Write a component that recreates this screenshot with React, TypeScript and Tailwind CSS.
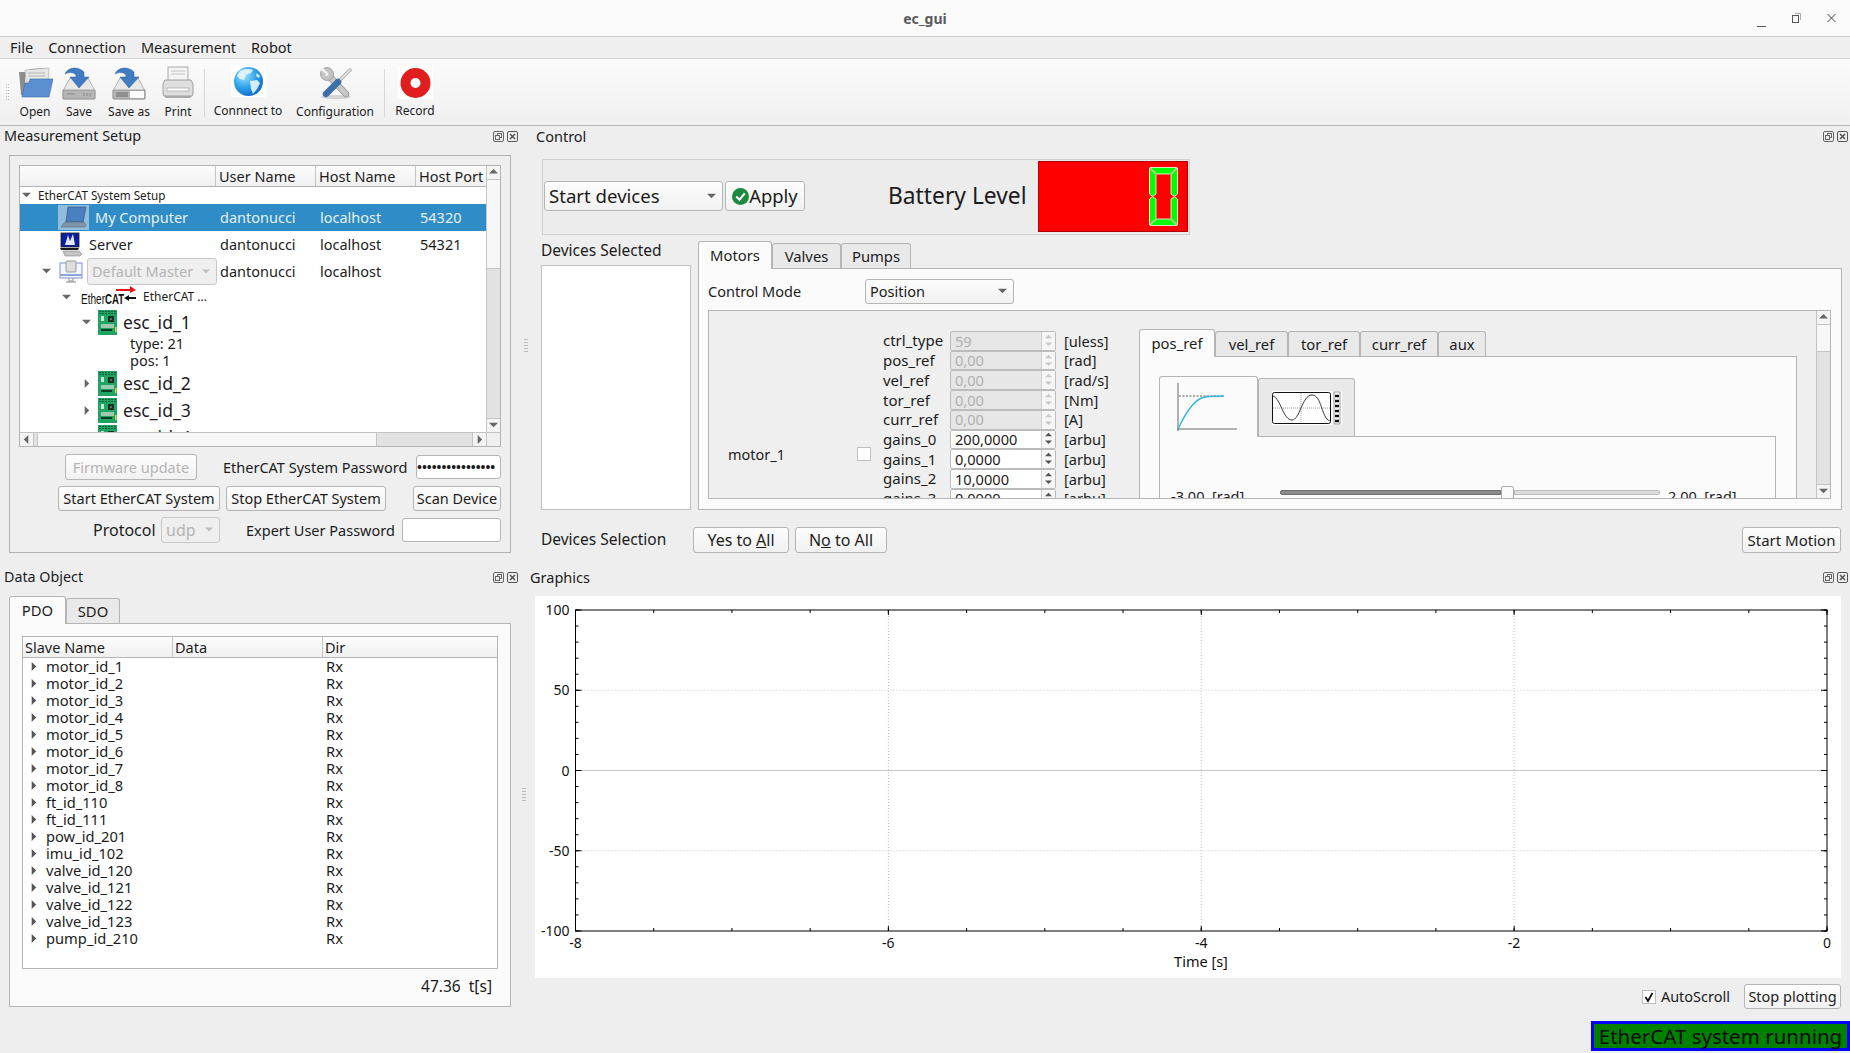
import type { ReactNode } from "react";

const FONT = "font-['Noto_Sans',sans-serif]";

function Tri({ dir, className = "" }: { dir: "up" | "down" | "left" | "right"; className?: string }) {
  const pts = {
    up: "0,6 5,1 10,6",
    down: "0,2 10,2 5,7",
    left: "7,0 7,10 2,5",
    right: "3,0 3,10 8,5",
  }[dir];
  return (
    <svg viewBox="0 0 10 10" className={`shrink-0 fill-current ${className}`}>
      <polygon points={pts} />
    </svg>
  );
}

function DockButtons() {
  return (
    <div className="flex gap-[3px]">
      <svg viewBox="0 0 11 11" className="h-[11px] w-[11px] fill-none stroke-[#666]">
        <rect x="0.5" y="0.5" width="10" height="10" rx="1.5" />
        <rect x="4.5" y="2.5" width="4" height="4" />
        <rect x="2.5" y="4.5" width="4" height="4" fill="#eee" />
      </svg>
      <svg viewBox="0 0 11 11" className="h-[11px] w-[11px] fill-none stroke-[#555]">
        <rect x="0.5" y="0.5" width="10" height="10" rx="1.5" />
        <path d="M3 3l5 5M8 3l-5 5" strokeWidth="1.6" />
      </svg>
    </div>
  );
}

function Btn({ className = "", disabled, children }: { className?: string; disabled?: boolean; children: ReactNode }) {
  return (
    <div
      className={`flex shrink-0 items-center justify-center rounded-[3px] border border-[#b5b5b5] bg-linear-to-b from-[#fdfdfd] to-[#f1f1f1] leading-none ${
        disabled ? "text-[#b4b4b4]" : "text-[#1c1c1c]"
      } ${className}`}
    >
      {children}
    </div>
  );
}

function Tab({ active, className = "", children }: { active?: boolean; className?: string; children: ReactNode }) {
  return (
    <div
      className={`flex shrink-0 items-center justify-center rounded-t-[3px] border border-b-0 border-[#b5b5b5] text-[14.8px] leading-none text-[#1c1c1c] ${
        active ? "relative z-10 -mb-px bg-[#fbfbfb]" : "mt-[2px] bg-[#e9e9e9]"
      } ${className}`}
    >
      {children}
    </div>
  );
}

/* toolbar icons */
function OpenIcon() {
  return (
    <svg viewBox="0 0 36 34" className="h-[34px] w-[36px]">
      <path d="M2 6h9l2-3 15-1v9H8v20L4 29z" fill="#8c8c8c" />
      <path d="M8 4l24-2-1 14H9z" fill="#e6e6e6" stroke="#aaa" strokeWidth="0.6" />
      <path d="M11 7h17M11 10h17" stroke="#aaa" strokeWidth="0.8" />
      <path d="M13 13h23l-4 18H5l3-14h4z" fill="#5c8fd0" stroke="#3c6ba8" strokeWidth="0.6" />
    </svg>
  );
}

function SaveIcon({ as }: { as?: boolean }) {
  return (
    <svg viewBox="0 0 34 34" className="h-[34px] w-[34px]">
      <path d="M8 12h18l7 13v8H1v-8z" fill="#e8e8e8" stroke="#999" strokeWidth="0.7" />
      <path d="M1 24h32v8a1 1 0 0 1-1 1H2a1 1 0 0 1-1-1z" fill="#b5b5b5" stroke="#8a8a8a" strokeWidth="0.7" />
      {as ? (
        <>
          <rect x="4" y="26" width="12" height="5" fill="#8f8f8f" />
          <rect x="18" y="25" width="14" height="7" fill="#fbfbfb" />
        </>
      ) : (
        <path d="M5 28h8M22 27v3M25 27v3M28 27v3" stroke="#888" strokeWidth="1" />
      )}
      <path d="M3 8C6 1 16 0 22 6v5h5L17 22 8 11h6V9c-3-3-7-3-11-1z" fill="#3f7cc0" stroke="#2d5f9e" strokeWidth="0.5" />
    </svg>
  );
}

function PrintIcon() {
  return (
    <svg viewBox="0 0 32 34" className="h-[34px] w-[32px]">
      <rect x="6" y="1" width="20" height="14" fill="#f4f4f4" stroke="#999" strokeWidth="0.8" />
      <path d="M9 5h14M9 8h14" stroke="#c4c4c4" />
      <path d="M3 14h26l2 4v10a2 2 0 0 1-2 2H3a2 2 0 0 1-2-2V18z" fill="#dedede" stroke="#8e8e8e" strokeWidth="0.8" />
      <rect x="5" y="22" width="22" height="3" fill="#fafafa" stroke="#9a9a9a" strokeWidth="0.6" />
      <path d="M2 30h28l-2 2H4z" fill="#a8a8a8" />
    </svg>
  );
}

function GlobeIcon() {
  return (
    <svg viewBox="0 0 35 31" className="h-[31px] w-[35px] bg-white">
      <defs>
        <radialGradient id="globeFill" cx="0.35" cy="0.3" r="0.8">
          <stop offset="0" stopColor="#9fe3ff" />
          <stop offset="0.55" stopColor="#2a9de8" />
          <stop offset="1" stopColor="#0a5fc4" />
        </radialGradient>
      </defs>
      <circle cx="17.5" cy="15.5" r="14.5" fill="url(#globeFill)" />
      <path d="M9 5c4-2 9-3 13-1l-2 3-5 2-2 5-4-1-3-3zM19 15l7-1 3 3-3 6-4 5-2-5zM26 7l3 3-1 2-3-2z" fill="#e4f7ff" opacity="0.9" />
    </svg>
  );
}

function ConfigIcon() {
  return (
    <svg viewBox="0 0 33 33" className="h-[33px] w-[33px] fill-none">
      <ellipse cx="17" cy="30" rx="15" ry="2" fill="#d4d4d4" />
      <path d="M10 9L27 27" stroke="#8f8f8f" strokeWidth="6.5" strokeLinecap="round" />
      <path d="M10 9L27 27" stroke="#c8c8c8" strokeWidth="5" strokeLinecap="round" />
      <circle cx="8" cy="7" r="6.5" fill="#c4c4c4" stroke="#8f8f8f" strokeWidth="0.7" />
      <path d="M1 2.5L7 7l-1 2 2 0 2-2L3 0z" fill="#f4f4f4" />
      <path d="M31 3L19 15" stroke="#a8a8a8" strokeWidth="3.4" strokeLinecap="round" />
      <path d="M31 3L19 15" stroke="#dedede" strokeWidth="2" strokeLinecap="round" />
      <path d="M19 15L7 27" stroke="#3f6fa8" strokeWidth="6.5" strokeLinecap="round" />
    </svg>
  );
}

function RecordIcon() {
  return (
    <svg viewBox="0 0 35 33" className="h-[33px] w-[35px] bg-white">
      <circle cx="17.5" cy="17" r="15" fill="#e21d1d" />
      <circle cx="17.5" cy="17" r="5" fill="#fff" />
    </svg>
  );
}

function ToolItem({ icon, label, className = "", iconClass = "items-end" }: { icon: ReactNode; label: string; className?: string; iconClass?: string }) {
  return (
    <div className={`flex shrink-0 flex-col items-center ${className}`}>
      <div className={`flex h-[36px] ${iconClass}`}>{icon}</div>
      <span className="whitespace-nowrap text-[12px] leading-none text-[#1c1c1c]">{label}</span>
    </div>
  );
}

/* tree icons */
function LaptopIcon() {
  return (
    <svg viewBox="0 0 31 25" className="h-[25px] w-[31px] bg-[#8fbddb]">
      <path d="M10 2h18l-3 15H8z" fill="#4a7fc0" stroke="#3a5f8e" strokeWidth="0.8" />
      <path d="M7 17h19l2 3-1 2H3z" fill="#7f95a8" stroke="#55697a" strokeWidth="0.6" />
    </svg>
  );
}

function ServerIcon() {
  return (
    <svg viewBox="0 0 24 25" className="h-[25px] w-[24px]">
      <rect x="2" y="1" width="18" height="14" fill="#0b1f9e" stroke="#222" strokeWidth="0.8" />
      <path d="M6 13l3-10 2 6 3-7 2 11z" fill="#dfe8ff" />
      <path d="M1 16h19l-1 2H2z" fill="#1a1a1a" />
      <path d="M4 19h16l3 3-2 2H6z" fill="#c4c4c4" stroke="#888" strokeWidth="0.6" />
    </svg>
  );
}

function MasterIcon() {
  return (
    <svg viewBox="0 0 24 25" className="h-[25px] w-[24px] fill-none">
      <rect x="1" y="4" width="22" height="15" fill="#f2f6fd" stroke="#7e92c9" />
      <rect x="7" y="2" width="10" height="11" rx="1" fill="#ddd" stroke="#999" />
      <path d="M1 16h22" stroke="#8ea4db" strokeWidth="2" />
      <path d="M10 19v3h4v-3M7 23h10" stroke="#aaa" strokeWidth="1.4" />
    </svg>
  );
}

function EtherCatLogo() {
  return (
    <svg viewBox="0 0 56 24" className="h-[24px] w-[56px] shrink-0">
      <text x="1" y="19" fontFamily="Liberation Sans, sans-serif" fontSize="15" textLength="24" lengthAdjust="spacingAndGlyphs" fill="#111">
        Ether
      </text>
      <text x="25" y="19" fontFamily="Liberation Sans, sans-serif" fontSize="15" fontWeight="700" textLength="19" lengthAdjust="spacingAndGlyphs" fill="#111">
        CAT
      </text>
      <path d="M36 4h14V1l6 4-6 3V6H36z" fill="#e1161b" />
      <path d="M56 12H49v-2l-5 3 5 3v-2h7z" fill="#111" />
    </svg>
  );
}

function ChipIcon() {
  return (
    <svg viewBox="0 0 19 25" className="h-[25px] w-[19px] shrink-0">
      <rect width="19" height="25" fill="#1fa463" />
      <path d="M1 1.5h17M1 3.5h17" stroke="#0d5f38" strokeWidth="1" strokeDasharray="2 1" />
      <rect x="3" y="6" width="3" height="5" fill="#c9e7d6" />
      <rect x="10" y="6" width="6" height="6" fill="#16331f" />
      <rect x="12" y="8" width="2" height="2" fill="#666" />
      <path d="M3 15h13M3 17h13" stroke="#c7d6cc" strokeWidth="1.4" />
      <path d="M3 20h11" stroke="#0a3d24" strokeWidth="2" />
      <rect x="17" y="17" width="1.5" height="5" fill="#e6d24a" />
    </svg>
  );
}

function TreeRow({ h, left, user, host, port, className = "" }: { h: string; left: ReactNode; user?: string; host?: string; port?: string; className?: string }) {
  return (
    <div className={`flex shrink-0 items-center text-[14.5px] leading-none ${h} ${className}`}>
      <div className="flex w-[197px] shrink-0 items-center">{left}</div>
      <span className="w-[100px] shrink-0 pl-[3px]">{user}</span>
      <span className="w-[100px] shrink-0 pl-[3px]">{host}</span>
      <span className="w-[66px] shrink-0 pl-[3px]">{port}</span>
    </div>
  );
}

function MeasurementDock() {
  const esc = (name: string, open?: boolean) => (
    <TreeRow
      h="h-[27px]"
      left={
        <>
          <Tri dir={open ? "down" : "right"} className="ml-[62px] h-[9px] w-[9px] text-[#666]" />
          <span className="ml-[7px]">
            <ChipIcon />
          </span>
          <span className="ml-[6px] text-[17.6px]">{name}</span>
        </>
      }
    />
  );
  return (
    <div className="flex h-full w-[525px] shrink-0 flex-col">
      <div className="flex h-[29px] shrink-0 items-center justify-between pb-[8px] pl-[4px] pr-[7px]">
        <span className="text-[14.4px] leading-none">Measurement Setup</span>
        <DockButtons />
      </div>
      <div className="ml-[9px] flex h-[398px] w-[502px] flex-col border border-[#b3b3b3] bg-[#efefef] pl-[9px] pt-[9px]">
        {/* tree */}
        <div className="flex h-[282px] w-[482px] shrink-0 flex-col border border-[#b3b3b3] bg-white">
          <div className="flex min-h-0 flex-1">
            <div className="flex min-w-0 flex-1 flex-col overflow-hidden">
              <div className="flex h-[21px] shrink-0 border-b border-[#b3b3b3] bg-linear-to-b from-[#fcfcfc] to-[#f0f0f0] text-[14.5px] leading-none">
                <div className="w-[196px] shrink-0 border-r border-[#c4c4c4]" />
                <div className="flex w-[100px] shrink-0 items-center border-r border-[#c4c4c4] pl-[3px]">User Name</div>
                <div className="flex w-[100px] shrink-0 items-center border-r border-[#c4c4c4] pl-[3px]">Host Name</div>
                <div className="flex flex-1 items-center pl-[3px] whitespace-nowrap">Host Port</div>
              </div>
              <div className="flex h-[17px] shrink-0 items-center text-[11.7px] leading-none">
                <Tri dir="down" className="ml-[2px] h-[9px] w-[9px] text-[#666]" />
                <span className="ml-[7px]">EtherCAT System Setup</span>
              </div>
              <TreeRow
                h="h-[27px]"
                className="bg-[#308cc6] text-[#e4f1fa]"
                left={
                  <>
                    <span className="ml-[38px]">
                      <LaptopIcon />
                    </span>
                    <span className="ml-[6px]">My Computer</span>
                  </>
                }
                user="dantonucci"
                host="localhost"
                port="54320"
              />
              <TreeRow
                h="h-[27px]"
                left={
                  <>
                    <span className="ml-[39px]">
                      <ServerIcon />
                    </span>
                    <span className="ml-[6px]">Server</span>
                  </>
                }
                user="dantonucci"
                host="localhost"
                port="54321"
              />
              <TreeRow
                h="h-[27px]"
                left={
                  <>
                    <Tri dir="down" className="ml-[22px] h-[9px] w-[9px] text-[#666]" />
                    <span className="ml-[8px]">
                      <MasterIcon />
                    </span>
                    <div className="ml-[4px] flex h-[27px] w-[130px] shrink-0 items-center justify-between rounded-[3px] border border-[#c8c8c8] bg-[#efefef] pl-[4px] pr-[6px] text-[#b4b4b4]">
                      <span>Default Master</span>
                      <Tri dir="down" className="h-[8px] w-[8px] text-[#c0c0c0]" />
                    </div>
                  </>
                }
                user="dantonucci"
                host="localhost"
              />
              <TreeRow
                h="h-[24px]"
                left={
                  <>
                    <Tri dir="down" className="ml-[42px] h-[9px] w-[9px] text-[#666]" />
                    <span className="ml-[9px] flex">
                      <EtherCatLogo />
                    </span>
                    <span className="ml-[7px] whitespace-nowrap text-[12px]">EtherCAT ...</span>
                  </>
                }
              />
              {esc("esc_id_1", true)}
              <div className="flex h-[17px] shrink-0 items-center pb-[3px] pl-[110px] text-[14.5px] leading-none">type: 21</div>
              <div className="flex h-[17px] shrink-0 items-center pb-[3px] pl-[110px] text-[14.5px] leading-none">pos: 1</div>
              {esc("esc_id_2")}
              {esc("esc_id_3")}
              {esc("esc_id_4")}
            </div>
            {/* vertical scrollbar */}
            <div className="flex w-[14px] shrink-0 flex-col border-l border-[#c4c4c4] bg-[#e2e2e2]">
              <div className="flex h-[14px] shrink-0 items-center justify-center border-b border-[#c4c4c4] bg-[#f4f4f4]">
                <Tri dir="up" className="h-[9px] w-[9px] text-[#666]" />
              </div>
              <div className="h-[89px] shrink-0 border-b border-[#c4c4c4] bg-[#f7f7f7]" />
              <div className="flex-1" />
              <div className="flex h-[14px] shrink-0 items-center justify-center border-t border-[#c4c4c4] bg-[#f4f4f4]">
                <Tri dir="down" className="h-[9px] w-[9px] text-[#666]" />
              </div>
            </div>
          </div>
          {/* horizontal scrollbar */}
          <div className="flex h-[14px] shrink-0 border-t border-[#c4c4c4] bg-[#e2e2e2]">
            <div className="flex w-[14px] shrink-0 items-center justify-center border-r border-[#c4c4c4] bg-[#f4f4f4]">
              <Tri dir="left" className="h-[9px] w-[9px] text-[#666]" />
            </div>
            <div className="ml-[3px] w-[340px] shrink-0 border-x border-[#c4c4c4] bg-[#f7f7f7]" />
            <div className="flex-1" />
            <div className="flex w-[14px] shrink-0 items-center justify-center border-l border-[#c4c4c4] bg-[#f4f4f4]">
              <Tri dir="right" className="h-[9px] w-[9px] text-[#666]" />
            </div>
            <div className="w-[14px] shrink-0 border-l border-[#c4c4c4] bg-[#efefef]" />
          </div>
        </div>
        {/* form rows */}
        <div className="mt-[7px] flex h-[26px] w-[482px] shrink-0 items-center text-[14.5px] leading-none">
          <Btn disabled className="ml-[46px] h-[26px] w-[132px] text-[14.5px]">
            Firmware update
          </Btn>
          <span className="ml-[26px] whitespace-nowrap">EtherCAT System Password</span>
          <div className="ml-auto flex h-[24px] w-[85px] shrink-0 items-center overflow-hidden rounded-[3px] border border-[#b5b5b5] bg-white text-[13px] font-bold">
            ••••••••••••••••
          </div>
        </div>
        <div className="mt-[6px] flex h-[25px] w-[482px] shrink-0 items-center text-[14.5px]">
          <Btn className="ml-[39px] h-[25px] w-[162px]">Start EtherCAT System</Btn>
          <Btn className="ml-[6px] h-[25px] w-[160px]">Stop EtherCAT System</Btn>
          <Btn className="ml-auto h-[25px] w-[88px]">Scan Device</Btn>
        </div>
        <div className="mt-[6px] flex h-[26px] w-[482px] shrink-0 items-center text-[14.5px] leading-none">
          <span className="ml-[74px] w-[68px] shrink-0 text-[16px]">Protocol</span>
          <div className="flex h-[26px] w-[59px] shrink-0 items-center justify-between rounded-[3px] border border-[#c8c8c8] bg-[#efefef] pl-[4px] pr-[6px] text-[#b4b4b4]">
            <span className="text-[16px]">udp</span>
            <Tri dir="down" className="h-[8px] w-[8px] text-[#c0c0c0]" />
          </div>
          <span className="ml-[26px] whitespace-nowrap">Expert User Password</span>
          <div className="ml-auto h-[24px] w-[99px] shrink-0 rounded-[3px] border border-[#b5b5b5] bg-white" />
        </div>
      </div>
    </div>
  );
}

function BatteryDigit() {
  return (
    <svg viewBox="0 0 29 59" className="h-[59px] w-[29px]">
      <g fill="#00ff00" stroke="#e4f3dc" strokeWidth="0.9">
        <polygon points="1,0.5 28,0.5 21.5,7 7.5,7" />
        <polygon points="0.5,1 7,7.5 7,27 3.5,29.5 0.5,27" />
        <polygon points="28.5,1 22,7.5 22,27 25.5,29.5 28.5,27" />
        <polygon points="0.5,58 7,51.5 7,32 3.5,29.5 0.5,32" />
        <polygon points="28.5,58 22,51.5 22,32 25.5,29.5 28.5,32" />
        <polygon points="1,58.5 28,58.5 21.5,52 7.5,52" />
      </g>
    </svg>
  );
}

const SPIN_ROWS = [
  ["ctrl_type", "59", "[uless]", true],
  ["pos_ref", "0,00", "[rad]", true],
  ["vel_ref", "0,00", "[rad/s]", true],
  ["tor_ref", "0,00", "[Nm]", true],
  ["curr_ref", "0,00", "[A]", true],
  ["gains_0", "200,0000", "[arbu]", false],
  ["gains_1", "0,0000", "[arbu]", false],
  ["gains_2", "10,0000", "[arbu]", false],
  ["gains_3", "0,0000", "[arbu]", false],
  ["gains_4", "0,0000", "[arbu]", false],
] as const;

function SpinRow({ label, value, unit, off }: { label: string; value: string; unit: string; off: boolean }) {
  return (
    <div className="flex h-[19.72px] shrink-0 items-center text-[14.6px] leading-none">
      <span className="w-[67px] shrink-0 text-[15px]">{label}</span>
      <div className={`flex h-full w-[106px] shrink-0 items-center rounded-[2px] border border-[#bcbcbc] ${off ? "bg-[#e6e6e6] text-[#b0b0b0]" : "bg-white text-[#1c1c1c]"}`}>
        <span className="flex-1 pl-[4px]">{value}</span>
        <div className={`flex h-full w-[14px] shrink-0 flex-col items-center justify-center border-l border-[#cfcfcf] bg-[#f6f6f6] ${off ? "text-[#c8c8c8]" : "text-[#555]"}`}>
          <Tri dir="up" className="h-[7px] w-[7px]" />
          <Tri dir="down" className="h-[7px] w-[7px]" />
        </div>
      </div>
      <span className="ml-[8px] w-[75px] shrink-0">{unit}</span>
    </div>
  );
}

function StepIcon() {
  return (
    <svg viewBox="0 0 60 50" className="h-[50px] w-[60px] fill-none">
      <path d="M1 1v48M0 47h60" stroke="#444" strokeWidth="0.8" />
      <path d="M2 14h45" stroke="#333" strokeWidth="0.8" strokeDasharray="2 1.5" />
      <path d="M1 47C9 30 17 18 26 15.5c6-1.5 14-1.5 21-1.5" stroke="#2fb3dc" strokeWidth="1.3" />
    </svg>
  );
}

function SineIcon() {
  return (
    <svg viewBox="0 0 70 34" className="h-[34px] w-[70px] bg-white fill-none">
      <rect x="0.5" y="1.5" width="58" height="31" rx="2" stroke="#111" strokeWidth="1" />
      <path d="M1 17h57M29 2v30" stroke="#888" strokeWidth="0.8" strokeDasharray="1 1" />
      <path d="M1 5c8 3 10 24 19 24 8 0 10-25 20-25s9 23 18 26" stroke="#222" strokeWidth="0.9" />
      <rect x="62" y="1" width="6" height="32" stroke="#555" strokeWidth="0.6" />
      <path d="M63 5h4M63 10h4M63 15h4M63 20h4M63 25h4M63 30h4" stroke="#111" strokeWidth="2.4" />
    </svg>
  );
}

function ControlDock() {
  return (
    <div className="flex h-full min-w-0 flex-1 flex-col">
      <div className="flex h-[33px] shrink-0 items-center justify-between pb-[12px] pl-[11px] pr-[2px]">
        <span className="text-[14.5px] leading-none">Control</span>
        <DockButtons />
      </div>
      {/* top strip */}
      <div className="ml-[17px] flex h-[76px] w-[648px] shrink-0 items-center border border-[#d0d0d0] bg-[#ececec] pb-[2px] pl-[1px] pr-[1px]">
        <div className="flex h-[30px] w-[179px] shrink-0 items-center justify-between rounded-[3px] border border-[#b5b5b5] bg-linear-to-b from-[#fdfdfd] to-[#f1f1f1] pl-[4px] pr-[6px] text-[18.6px] leading-none">
          <span>Start devices</span>
          <Tri dir="down" className="h-[9px] w-[9px] text-[#666]" />
        </div>
        <Btn className="ml-[2px] h-[30px] w-[80px] text-[18.4px]">
          <svg viewBox="0 0 16 16" className="h-[17px] w-[17px]">
            <circle cx="8" cy="8" r="8" fill="#1c8a3e" />
            <path d="M4 8l3 3 5-6" fill="none" stroke="#fff" strokeWidth="2" />
          </svg>
          Apply
        </Btn>
        <span className="ml-[83px] whitespace-nowrap text-[22.8px] leading-none">Battery Level</span>
        <div className="ml-auto flex h-[71px] w-[150px] shrink-0 items-center justify-end border border-[#b00000] bg-[#ff0000] pr-[9px]">
          <BatteryDigit />
        </div>
      </div>
      {/* middle */}
      <div className="ml-[16px] mt-[6px] flex h-[269px] shrink-0">
        <div className="flex w-[150px] shrink-0 flex-col">
          <div className="flex h-[24px] items-center text-[15.5px] leading-none">
            <span className="-mt-[5px]">Devices Selected</span>
          </div>
          <div className="flex-1 border border-[#c0c0c0] bg-white" />
        </div>
        <div className="ml-[7px] flex w-[1144px] shrink-0 flex-col">
          <div className="flex h-[27px] shrink-0">
            <Tab active className="h-[28px] w-[74px]">Motors</Tab>
            <Tab className="h-[25px] w-[69px]">Valves</Tab>
            <Tab className="h-[25px] w-[70px]">Pumps</Tab>
          </div>
          <div className="flex min-h-0 flex-1 flex-col border border-[#b5b5b5] bg-[#fbfbfb] pl-[9px] pr-[10px] pt-[10px]">
            <div className="flex h-[25px] shrink-0 items-center text-[14.5px] leading-none">
              <span className="w-[157px] shrink-0">Control Mode</span>
              <div className="flex h-[25px] w-[149px] shrink-0 items-center justify-between rounded-[3px] border border-[#b5b5b5] bg-linear-to-b from-[#fdfdfd] to-[#f1f1f1] pl-[4px] pr-[6px]">
                <span>Position</span>
                <Tri dir="down" className="h-[9px] w-[9px] text-[#666]" />
              </div>
            </div>
            {/* scroll area */}
            <div className="mt-[6px] flex h-[189px] shrink-0 overflow-hidden border border-[#b5b5b5] bg-[#efefef]">
              <div className="flex min-w-0 flex-1 overflow-hidden pt-[18px]">
                <div className="flex h-[250px] w-[148px] shrink-0 items-center pl-[19px] text-[14.5px] leading-none">motor_1</div>
                <div className="flex h-[250px] w-[26px] shrink-0 items-center">
                  <div className="h-[14px] w-[14px] border border-[#c0c0c0] bg-white" />
                </div>
                <div className="flex w-[256px] shrink-0 flex-col pt-[2px]">
                  {SPIN_ROWS.map(([label, value, unit, off]) => (
                    <SpinRow key={label} label={label} value={value} unit={unit} off={off} />
                  ))}
                </div>
                {/* ref tabs */}
                <div className="flex w-[658px] shrink-0 flex-col">
                  <div className="flex h-[27px] shrink-0">
                    <Tab active className="h-[28px] w-[76px]">pos_ref</Tab>
                    <Tab className="h-[25px] w-[73px]">vel_ref</Tab>
                    <Tab className="h-[25px] w-[72px]">tor_ref</Tab>
                    <Tab className="h-[25px] w-[78px]">curr_ref</Tab>
                    <Tab className="h-[25px] w-[48px]">aux</Tab>
                  </div>
                  <div className="h-[200px] shrink-0 border border-[#b5b5b5] bg-[#fbfbfb] pl-[19px] pr-[20px] pt-[19px]">
                    <div className="flex h-[60px]">
                      <div className="relative z-10 flex h-[61px] w-[99px] shrink-0 items-start rounded-t-[3px] border border-b-0 border-[#b5b5b5] bg-[#fbfbfb] pl-[17px] pt-[5px]">
                        <StepIcon />
                      </div>
                      <div className="mt-[2px] flex h-[58px] w-[97px] shrink-0 items-center justify-center rounded-t-[3px] border border-b-0 border-[#b5b5b5] bg-[#e9e9e9]">
                        <SineIcon />
                      </div>
                    </div>
                    <div className="flex h-[100px] w-[617px] items-start border border-[#b5b5b5] pt-[50px] text-[14.5px] leading-none">
                      <span className="ml-[11px] w-[109px] shrink-0 whitespace-nowrap pt-[2px]">-3,00&nbsp;&nbsp;[rad]</span>
                      <div className="mt-[3px] flex w-[380px] shrink-0 items-center">
                        <div className="h-[5px] w-[221px] rounded-l-[2px] border border-[#6f6f6f] bg-[#8c8c8c]" />
                        <div className="-my-[4px] h-[13px] w-[13px] shrink-0 rounded-[2px] border border-[#aaa] bg-[#fafafa]" />
                        <div className="h-[5px] flex-1 rounded-r-[2px] border border-[#bbb] bg-[#ddd]" />
                      </div>
                      <span className="ml-[8px] whitespace-nowrap pt-[2px]">2,00&nbsp;&nbsp;[rad]</span>
                    </div>
                  </div>
                </div>
              </div>
              <div className="flex w-[14px] shrink-0 flex-col border-l border-[#c4c4c4] bg-[#e2e2e2]">
                <div className="flex h-[14px] shrink-0 items-center justify-center border-b border-[#c4c4c4] bg-[#f4f4f4]">
                  <Tri dir="up" className="h-[9px] w-[9px] text-[#666]" />
                </div>
                <div className="h-[27px] shrink-0 border-b border-[#c4c4c4] bg-[#f7f7f7]" />
                <div className="flex-1" />
                <div className="flex h-[14px] shrink-0 items-center justify-center border-t border-[#c4c4c4] bg-[#f4f4f4]">
                  <Tri dir="down" className="h-[9px] w-[9px] text-[#666]" />
                </div>
              </div>
            </div>
          </div>
        </div>
      </div>
      {/* bottom buttons */}
      <div className="ml-[16px] mt-[17px] flex h-[26px] w-[1300px] shrink-0 items-center">
        <span className="w-[152px] shrink-0 text-[15.5px] leading-none">Devices Selection</span>
        <Btn className="h-[26px] w-[96px] text-[16px]">
          <span>
            Yes to <u>A</u>ll
          </span>
        </Btn>
        <Btn className="ml-[6px] h-[26px] w-[92px] text-[16px]">
          <span>
            N<u>o</u> to All
          </span>
        </Btn>
        <Btn className="ml-auto h-[26px] w-[99px] text-[15px]">Start Motion</Btn>
      </div>
    </div>
  );
}

function DataDock() {
  const names = [
    "motor_id_1", "motor_id_2", "motor_id_3", "motor_id_4", "motor_id_5", "motor_id_6", "motor_id_7", "motor_id_8",
    "ft_id_110", "ft_id_111", "pow_id_201", "imu_id_102", "valve_id_120", "valve_id_121", "valve_id_122", "valve_id_123", "pump_id_210",
  ];
  return (
    <div className="flex h-full w-[525px] shrink-0 flex-col">
      <div className="flex h-[32px] shrink-0 items-center justify-between pb-[5px] pl-[4px] pr-[7px]">
        <span className="text-[14.3px] leading-none">Data Object</span>
        <DockButtons />
      </div>
      <div className="ml-[9px] flex h-[27px] shrink-0">
        <Tab active className="h-[28px] w-[57px]">PDO</Tab>
        <Tab className="h-[25px] w-[54px]">SDO</Tab>
      </div>
      <div className="ml-[9px] flex h-[384px] w-[502px] shrink-0 flex-col border border-[#b5b5b5] bg-[#fbfbfb] pl-[12px] pr-[12px] pt-[12px]">
        <div className="flex h-[333px] shrink-0 flex-col border border-[#b5b5b5] bg-white">
          <div className="flex h-[21px] shrink-0 border-b border-[#b5b5b5] bg-linear-to-b from-[#fcfcfc] to-[#f0f0f0] text-[14.5px] leading-none">
            <div className="flex w-[150px] shrink-0 items-center border-r border-[#c4c4c4] pl-[2px]">Slave Name</div>
            <div className="flex w-[150px] shrink-0 items-center border-r border-[#c4c4c4] pl-[2px]">Data</div>
            <div className="flex flex-1 items-center pl-[2px]">Dir</div>
          </div>
          {names.map((n) => (
            <div key={n} className="flex h-[17px] shrink-0 items-center text-[14.7px] leading-none">
              <Tri dir="right" className="ml-[6px] h-[9px] w-[9px] text-[#555]" />
              <span className="ml-[8px] w-[277px] shrink-0">{n}</span>
              <span className="pl-[3px]">Rx</span>
            </div>
          ))}
        </div>
        <div className="mt-[8px] pr-[6px] text-right text-[15.5px] leading-[18px]">47.36&nbsp; t[s]</div>
      </div>
    </div>
  );
}

function Plot() {
  // axis box inside the widget
  const L = 40.5;
  const R = 1292;
  const T = 14;
  const B = 335;
  const W = R - L;
  const H = B - T;
  const xMajor = [0, 1, 2, 3, 4].map((i) => L + (W * i) / 4);
  const xMinor = Array.from({ length: 17 }, (_, i) => L + (W * i) / 16);
  const yMinor = Array.from({ length: 21 }, (_, i) => T + (H * i) / 20);
  const yMajor = [0, 1, 2, 3, 4].map((i) => T + (H * i) / 4);
  return (
    <svg viewBox="0 0 1306 382" className="h-[382px] w-[1306px] bg-white">
      {[xMajor[1], xMajor[2], xMajor[3]].map((x) => (
        <line key={x} x1={x} x2={x} y1={T} y2={B} stroke="#c0c0c0" strokeDasharray="1 2" />
      ))}
      {[yMajor[1], yMajor[3]].map((y) => (
        <line key={y} x1={L} x2={R} y1={y} y2={y} stroke="#c0c0c0" strokeDasharray="1 2" />
      ))}
      <line x1={L} x2={R} y1={yMajor[2]} y2={yMajor[2]} stroke="#c6c6c6" />
      <g stroke="#000">
        {xMinor.map((x) => (
          <path key={x} d={`M${x} ${T}v3M${x} ${B}v-3`} />
        ))}
        {yMinor.map((y) => (
          <path key={y} d={`M${L} ${y}h3M${R} ${y}h-3`} />
        ))}
        {xMajor.map((x) => (
          <path key={x} d={`M${x} ${T}v5M${x} ${B}v-5`} />
        ))}
        {yMajor.map((y) => (
          <path key={y} d={`M${L} ${y}h6M${R} ${y}h-6`} />
        ))}
        <rect x={L} y={T} width={W} height={H} fill="none" strokeWidth="1" />
      </g>
      <g fontFamily="Noto Sans, sans-serif" fontSize="14" fill="#111">
        {["100", "50", "0", "-50", "-100"].map((t, i) => (
          <text key={t} x={L - 6} y={yMajor[i] + 5} textAnchor="end">
            {t}
          </text>
        ))}
        {["-8", "-6", "-4", "-2", "0"].map((t, i) => (
          <text key={t} x={xMajor[i]} y={352} textAnchor="middle">
            {t}
          </text>
        ))}
        <text x={666} y={371} textAnchor="middle" fontSize="14.5">
          Time [s]
        </text>
      </g>
    </svg>
  );
}

function GraphicsDock() {
  return (
    <div className="flex h-full min-w-0 flex-1 flex-col">
      <div className="flex h-[32px] shrink-0 items-center justify-between pb-[5px] pl-[5px] pr-[2px]">
        <span className="text-[14.5px] leading-none">Graphics</span>
        <DockButtons />
      </div>
      <div className="ml-[10px] flex shrink-0">
        <Plot />
      </div>
      <div className="ml-[10px] mt-[6px] flex h-[25px] w-[1306px] shrink-0 items-center justify-end text-[14.5px] leading-none">
        <svg viewBox="0 0 14 14" className="h-[14px] w-[14px] shrink-0 fill-none">
          <rect x="0.5" y="0.5" width="13" height="13" fill="#fff" stroke="#bdbdbd" />
          <path d="M3.5 7l2.5 4 4.5-8" stroke="#111" strokeWidth="1.8" />
        </svg>
        <span className="ml-[5px] mr-[14px]">AutoScroll</span>
        <Btn className="h-[25px] w-[97px] text-[14.5px]">Stop plotting</Btn>
      </div>
      <div className="mt-[12px] flex h-[30px] w-[1325px] shrink-0 justify-end">
        <div className="flex h-[30px] w-[259px] items-center justify-center border-[3px] border-[#0000ff] bg-[#008000] text-[20.5px] leading-none text-[#0a0a0a]">
          EtherCAT system running
        </div>
      </div>
    </div>
  );
}

export default function App() {
  return (
    <div className={`${FONT} relative flex h-[1053px] w-[1850px] flex-col overflow-hidden bg-[#eeeeee] text-[#1c1c1c]`}>
      {/* title bar */}
      <div className="relative flex h-[37px] shrink-0 items-center justify-center border-b border-[#cfcfcf] bg-[#fafafa]">
        <span className="text-[14px] font-bold text-[#5a5a5a]">ec_gui</span>
        <div className="absolute right-[14px] top-[13px] flex items-start gap-[26px]">
          <svg viewBox="0 0 9 10" className="mt-[6px] h-[10px] w-[9px] stroke-[#555]">
            <path d="M0 7.5h9" />
          </svg>
          <svg viewBox="0 0 9 10" className="h-[10px] w-[9px] fill-none stroke-[#555]">
            <rect x="0.5" y="2.5" width="6" height="7" />
            <path d="M3 0.5h5.5V7" stroke="#aaa" />
          </svg>
          <svg viewBox="0 0 9 10" className="h-[10px] w-[9px] stroke-[#444]">
            <path d="M0.5 1l8 8M8.5 1l-8 8" />
          </svg>
        </div>
      </div>
      {/* menu */}
      <div className="flex h-[22px] shrink-0 items-center gap-[15px] border-b border-[#d6d6d6] bg-[#efefef] pl-[10px] text-[14.5px] leading-none">
        <span>File</span>
        <span>Connection</span>
        <span>Measurement</span>
        <span>Robot</span>
      </div>
      {/* toolbar */}
      <div className="flex h-[67px] shrink-0 items-start border-b border-[#b9b9b9] bg-linear-to-b from-[#fbfbfb] to-[#f0f0f0] pt-[5px]">
        <svg viewBox="0 0 4 17" className="ml-[6px] mt-[20px] h-[17px] w-[4px] fill-[#bdbdbd]">
          <path d="M0 0h1v1H0zM2 0h1v1H2zM0 3h1v1H0zM2 3h1v1H2zM0 6h1v1H0zM2 6h1v1H2zM0 9h1v1H0zM2 9h1v1H2zM0 12h1v1H0zM2 12h1v1H2zM0 15h1v1H0zM2 15h1v1H2z" />
        </svg>
        <ToolItem className="ml-[7px] w-[36px] gap-[6px]" icon={<OpenIcon />} label="Open" />
        <ToolItem className="ml-[9px] w-[34px] gap-[6px]" icon={<SaveIcon />} label="Save" />
        <ToolItem className="ml-[16px] w-[34px] gap-[6px]" icon={<SaveIcon as />} label="Save as" />
        <ToolItem className="ml-[16px] w-[32px] gap-[6px]" icon={<PrintIcon />} label="Print" />
        <div className="ml-[10px] mt-[5px] h-[48px] w-px shrink-0 bg-[#d8d8d8]" />
        <ToolItem className="ml-[9px] w-[68px] gap-[5px]" iconClass="items-start pt-[2px]" icon={<GlobeIcon />} label="Connnect to" />
        <ToolItem className="ml-[15px] w-[76px] gap-[6px]" icon={<ConfigIcon />} label="Configuration" />
        <div className="ml-[11px] mt-[5px] h-[48px] w-px shrink-0 bg-[#d8d8d8]" />
        <ToolItem className="ml-[10px] w-[40px] gap-[5px]" iconClass="items-start pt-[2px]" icon={<RecordIcon />} label="Record" />
      </div>
      {/* top docks */}
      <div className="flex h-[438px] shrink-0">
        <MeasurementDock />
        <ControlDock />
      </div>
      {/* bottom docks */}
      <div className="flex min-h-0 flex-1">
        <DataDock />
        <GraphicsDock />
      </div>
      {/* splitter grips */}
      <div className="absolute left-[524px] top-[338px] h-[16px] w-[4px] bg-[radial-gradient(#bbb_0.6px,transparent_0.7px)] bg-size-[2px_3px]" />
      <div className="absolute left-[522px] top-[787px] h-[16px] w-[4px] bg-[radial-gradient(#bbb_0.6px,transparent_0.7px)] bg-size-[2px_3px]" />
      <div className="absolute left-[918px] top-[563px] h-[2px] w-[16px] bg-[radial-gradient(#bbb_0.6px,transparent_0.7px)] bg-size-[3px_2px]" />
    </div>
  );
}
